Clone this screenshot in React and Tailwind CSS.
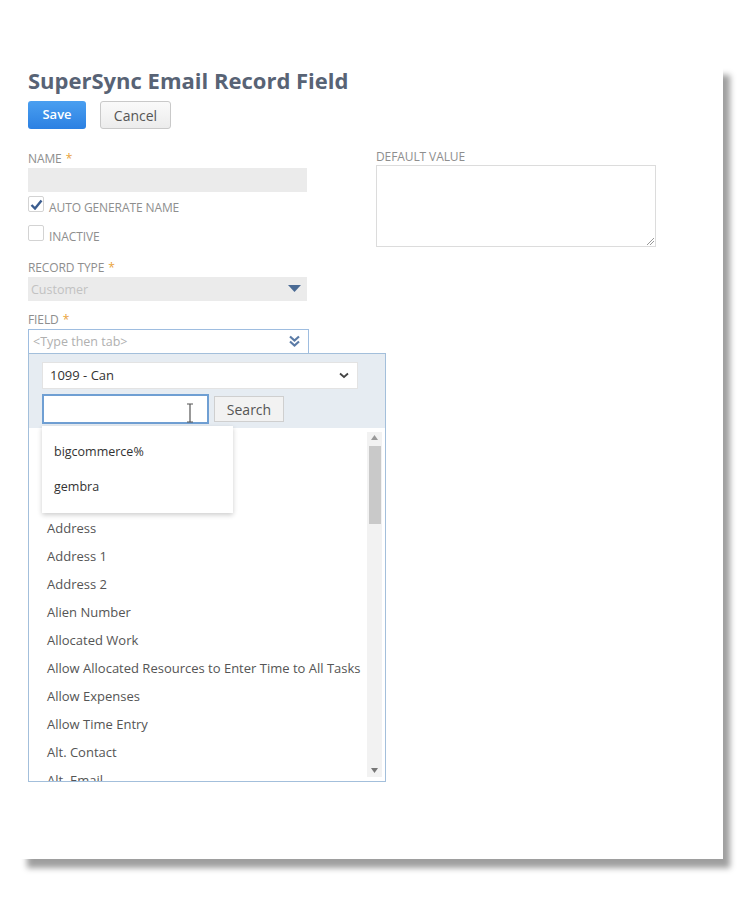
import { useState } from 'react'

const fields = [
  'Address',
  'Address 1',
  'Address 2',
  'Alien Number',
  'Allocated Work',
  'Allow Allocated Resources to Enter Time to All Tasks',
  'Allow Expenses',
  'Allow Time Entry',
  'Alt. Contact',
  'Alt. Email',
]

function Label({ children, required }) {
  return (
    <p className="h-[14px] text-[12px] leading-[14px] uppercase text-[#8e8e8e] tracking-[-0.1px]">
      {children}
      {required && <span className="text-[#e9a23b] ml-1">*</span>}
    </p>
  )
}

function Checkbox({ checked, label }) {
  return (
    <div className="flex items-start">
      <div className="w-[16px] h-[16px] border border-[#d3d3d3] bg-white rounded-[2px] flex items-center justify-center">
        {checked && (
          <svg width="13" height="11" viewBox="0 0 13 11">
            <path d="M1.5 6 L5 9.5 L11.5 1.5" fill="none" stroke="#3b5d8f" strokeWidth="2.4" />
          </svg>
        )}
      </div>
      <span className="ml-[5px] mt-[5px] text-[12px] leading-[14px] uppercase text-[#8e8e8e] tracking-[-0.1px]">
        {label}
      </span>
    </div>
  )
}

export default function App() {
  const [query, setQuery] = useState('')

  return (
    <div className="min-h-screen bg-white pt-[66px] pl-[20px] font-['Open_Sans',sans-serif]">
      <div className="w-[703px] h-[793px] bg-white pl-2 shadow-[7px_9px_6px_rgba(0,0,0,0.38)]">

        {/* Titulo */}
        <h1 className="text-[22px] leading-[28px] font-bold text-[#586375]">
          SuperSync Email Record Field
        </h1>

        {/* Botones */}
        <div className="flex gap-[14px] mt-[7px]">
          <button className="w-[58px] h-[28px] rounded-[3px] bg-gradient-to-b from-[#4a9ff0] to-[#2b80e2] text-white text-[13px] font-semibold">
            Save
          </button>
          <button className="w-[71px] h-[28px] rounded-[3px] border border-[#c9c9c9] bg-gradient-to-b from-[#fafafa] to-[#ececec] text-[#555] text-[14px]">
            Cancel
          </button>
        </div>

        <div className="flex mt-[23px]">
          {/* Columna izquierda */}
          <div className="w-[281px] flex flex-col">
            <Label required>Name</Label>
            <div className="mt-[2px] w-[279px] h-[24px] bg-[#ebebeb]" />

            <div className="mt-[4px]">
              <Checkbox checked label="Auto Generate Name" />
            </div>
            <div className="mt-[10px]">
              <Checkbox label="Inactive" />
            </div>

            <div className="mt-[17px]">
              <Label required>Record Type</Label>
            </div>
            <div className="mt-[2px] w-[279px] h-[24px] bg-[#ebebeb] flex items-center justify-between pl-[3px] pr-[6px]">
              <span className="text-[12.5px] text-[#c2c2c2] pt-[2px]">Customer</span>
              <svg width="13" height="8" viewBox="0 0 13 8">
                <path d="M0 0 H13 L6.5 7 Z" fill="#4a6a94" />
              </svg>
            </div>

            <div className="mt-[12px]">
              <Label required>Field</Label>
            </div>
            <div className="mt-[2px] w-[281px] h-[25px] border border-[#9ebde0] bg-white flex items-center justify-between pl-[4px] pr-[8px]">
              <span className="text-[12.5px] text-[#b0b0b0] pt-[1px]">&lt;Type then tab&gt;</span>
              <svg width="11" height="13" viewBox="0 0 11 13">
                <path d="M1 1.5 L5.5 5.5 L10 1.5 M1 6.5 L5.5 10.5 L10 6.5" fill="none" stroke="#5b7ba6" strokeWidth="2.2" />
              </svg>
            </div>

            {/* Panel desplegable */}
            <div className="relative -mt-[1px] w-[358px] h-[429px] border border-[#a3bfdb] bg-white flex flex-col shrink-0">
              <div className="bg-[#e6ecf2] pl-[13px] pt-[8px] pb-[4px]">
                <div className="w-[316px] h-[27px] bg-white border border-[#e3e3e3] flex items-center justify-between pl-[7px] pr-[8px]">
                  <span className="text-[13px] text-[#333]">1099 - Can</span>
                  <svg width="10" height="7" viewBox="0 0 10 7">
                    <path d="M1 1.5 L5 5 L9 1.5" fill="none" stroke="#444" strokeWidth="1.8" />
                  </svg>
                </div>
                <div className="flex items-center mt-[5px]">
                  <div className="relative w-[167px] h-[30px]">
                    <input
                      value={query}
                      onChange={e => setQuery(e.target.value)}
                      className="w-full h-full border-2 border-[#6f9fd3] bg-white outline-none px-1 text-[13px]"
                    />
                    <svg className="absolute left-[144px] top-[9px]" width="8" height="20" viewBox="0 0 8 20">
                      <path d="M1 1 H7 M4 1 V19 M1 19 H7" fill="none" stroke="#555" strokeWidth="1.2" />
                    </svg>
                  </div>
                  <button className="ml-[5px] w-[70px] h-[26px] border border-[#cfcfcf] bg-[#f2f2f2] text-[14px] text-[#555]">
                    Search
                  </button>
                </div>
              </div>

              {/* Lista */}
              <div className="flex-1 flex overflow-hidden">
                <div className="flex-1 pt-[87px] pl-[18px] overflow-hidden">
                  {fields.map(f => (
                    <div key={f} className="h-[28px] flex items-center text-[13px] text-[#555] whitespace-nowrap">
                      {f}
                    </div>
                  ))}
                </div>
                <div className="w-[15px] mr-[3px] my-[4px] bg-[#f2f2f2] flex flex-col items-center">
                  <svg className="mt-[3px]" width="7" height="5" viewBox="0 0 7 5">
                    <path d="M0 5 L3.5 0 L7 5 Z" fill="#999" />
                  </svg>
                  <div className="mt-[6px] w-[12px] h-[78px] bg-[#c9c9c9]" />
                  <div className="flex-1" />
                  <svg className="mb-[4px]" width="7" height="5" viewBox="0 0 7 5">
                    <path d="M0 0 L7 0 L3.5 5 Z" fill="#777" />
                  </svg>
                </div>
              </div>

              {/* Autocompletar */}
              <div className="absolute left-[13px] top-[72px] w-[191px] h-[87px] bg-white shadow-[0_2px_5px_rgba(0,0,0,0.2)] pt-[9px] pl-[12px]">
                <div className="h-[35px] flex items-center text-[12.5px] text-[#333]">bigcommerce%</div>
                <div className="h-[35px] flex items-center text-[12.5px] text-[#333]">gembra</div>
              </div>
            </div>
          </div>

          {/* Columna derecha */}
          <div className="ml-[67px] -mt-[2px]">
            <Label>Default Value</Label>
            <div className="relative mt-[1px] w-[280px] h-[82px] border border-[#dcdcdc] bg-white">
              <svg className="absolute right-[1px] bottom-[1px]" width="7" height="7" viewBox="0 0 7 7">
                <path d="M7 0 L0 7 M7 3 L3 7" stroke="#999" strokeWidth="1" />
              </svg>
            </div>
          </div>
        </div>

      </div>
    </div>
  )
}
